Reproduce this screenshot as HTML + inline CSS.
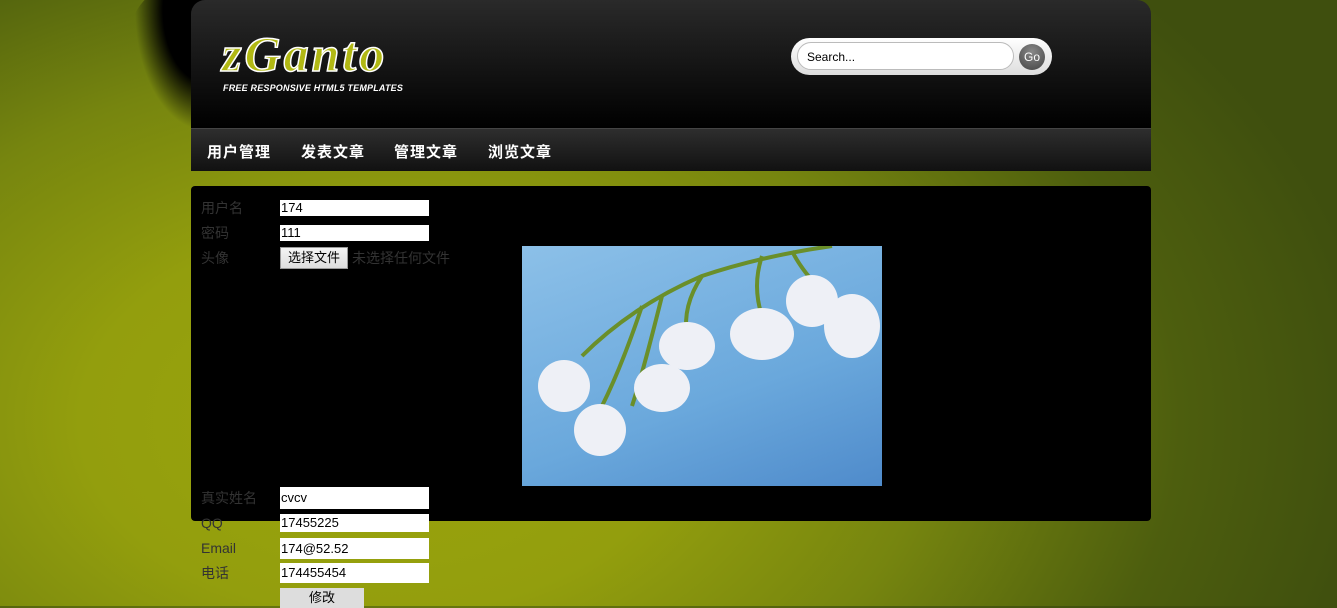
<!DOCTYPE html>
<html><head><meta charset="utf-8"><style>
*{margin:0;padding:0;box-sizing:border-box}
body{width:1337px;height:606px;overflow:hidden;position:relative;font-family:"Liberation Sans","Noto Sans CJK SC",sans-serif;
background:radial-gradient(ellipse 1000px 650px at 380px 420px,#9aa40c 0%,#939e0d 30%,#76850f 55%,#4d5e0e 80%,#3f4f0e 100%);}
.splat{position:absolute;left:125px;top:-10px;width:90px;height:150px;border-radius:50% 0 0 60%;background:radial-gradient(ellipse 70px 120px at 80px 20px,#000 60%,rgba(0,0,0,0) 100%)}
.header{position:absolute;left:191px;top:0;width:960px;height:128px;border-radius:14px 14px 0 0;background:linear-gradient(#2a2a2a,#000);}
.nav{position:absolute;left:191px;top:128px;width:960px;height:43px;background:linear-gradient(#2e2e2e,#111);border-top:1px solid #444}
.nav span{position:absolute;top:12px;color:#fff;font-weight:bold;font-size:15px;letter-spacing:1px}
.logo{position:absolute;left:222px;top:28px;font-family:"Liberation Serif",serif;font-style:italic;font-weight:bold;font-size:50px;color:#b1b814;-webkit-text-stroke:1.5px #fff;letter-spacing:3px;line-height:52px}
.tag{position:absolute;left:223px;top:83px;font-size:9px;font-weight:bold;font-style:italic;color:#fff;letter-spacing:.2px}
.search{position:absolute;left:791px;top:38px;width:261px;height:37px;border-radius:19px;background:linear-gradient(#fff,#ddd)}
.search .in{position:absolute;left:6px;top:4px;width:217px;height:28px;border-radius:14px;background:#fff;border:1px solid #bbb;font-size:12px;padding:7px 9px;color:#000}
.search .go{position:absolute;left:228px;top:6px;width:26px;height:26px;border-radius:13px;background:radial-gradient(circle at 50% 30%,#888,#444);color:#fff;font-size:12px;text-align:center;line-height:26px}
.main{position:absolute;left:191px;top:186px;width:960px;height:335px;background:#000;border-radius:4px}
.lbl{position:absolute;left:201px;font-size:14px;color:#333;line-height:16px}
.inp{position:absolute;left:280px;width:149px;background:#fff;font-size:13px;color:#000;padding-left:1px}
.file{position:absolute;left:280px;top:247px;width:68px;height:22px;background:linear-gradient(#f4f4f4,#ddd);border:1px solid #999;font-size:13px;text-align:center;line-height:20px}
.img{position:absolute;left:522px;top:246px;width:360px;height:240px;background:linear-gradient(160deg,#8cc0e8,#6aa8dc 60%,#4f8bcb)}
.btn{position:absolute;left:280px;top:588px;width:84px;height:20px;background:#ddd;font-size:13px;text-align:center;line-height:20px}
</style></head><body>
<div class="splat"></div>
<div class="header"></div>
<div class="logo">zGanto</div>
<div class="tag">FREE RESPONSIVE HTML5 TEMPLATES</div>
<div class="search"><div class="in">Search...</div><div class="go">Go</div></div>
<div class="nav"><span style="left:16px">用户管理</span><span style="left:110px">发表文章</span><span style="left:203px">管理文章</span><span style="left:297px">浏览文章</span></div>
<div class="main"></div>
<div class="lbl" style="top:200px">用户名</div><div class="inp" style="top:200px;height:16px;line-height:16px">174</div>
<div class="lbl" style="top:225px">密码</div><div class="inp" style="top:225px;height:16px;line-height:16px">111</div>
<div class="lbl" style="top:250px">头像</div><div class="file">选择文件</div>
<div class="lbl" style="top:250px;left:352px">未选择任何文件</div>
<div class="img"><svg width="360" height="240">
<g fill="none" stroke="#6a8f2a" stroke-width="4"><path d="M60 110 Q110 60 180 30 Q240 10 310 0"/><path d="M180 30 Q160 60 165 90"/><path d="M240 10 Q230 40 240 70"/><path d="M270 5 Q280 25 300 45"/><path d="M120 60 Q100 120 80 160"/><path d="M140 50 Q120 130 110 160"/></g>
<g fill="#eef0f6"><ellipse cx="165" cy="100" rx="28" ry="24"/><ellipse cx="240" cy="88" rx="32" ry="26"/><ellipse cx="290" cy="55" rx="26" ry="26"/><ellipse cx="330" cy="80" rx="28" ry="32"/><ellipse cx="140" cy="142" rx="28" ry="24"/><ellipse cx="42" cy="140" rx="26" ry="26"/><ellipse cx="78" cy="184" rx="26" ry="26"/></g></svg></div>
<div class="lbl" style="top:490px">真实姓名</div><div class="inp" style="top:487px;height:22px;line-height:22px">cvcv</div>
<div class="lbl" style="top:515px">QQ</div><div class="inp" style="top:514px;height:18px;line-height:18px">17455225</div>
<div class="lbl" style="top:540px">Email</div><div class="inp" style="top:538px;height:21px;line-height:21px">174@52.52</div>
<div class="lbl" style="top:565px">电话</div><div class="inp" style="top:563px;height:20px;line-height:20px">174455454</div>
<div class="btn">修改</div>
</body></html>
